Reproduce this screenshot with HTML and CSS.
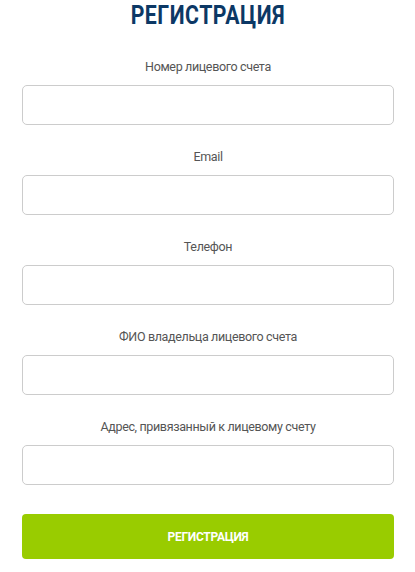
FILE: index.html
```html
<!DOCTYPE html>
<html lang="ru">
<head>
<meta charset="utf-8">
<link rel="stylesheet" href="styles.css">
</head>
<body>
<div class="page">
  <h1 class="title"><span class="title-text">РЕГИСТРАЦИЯ</span></h1>
  <form class="form">
    <div class="field">
      <label class="label">Номер лицевого счета</label>
      <input class="input" type="text">
    </div>
    <div class="field">
      <label class="label">Email</label>
      <input class="input" type="text">
    </div>
    <div class="field">
      <label class="label">Телефон</label>
      <input class="input" type="text">
    </div>
    <div class="field">
      <label class="label">ФИО владельца лицевого счета</label>
      <input class="input" type="text">
    </div>
    <div class="field">
      <label class="label">Адрес, привязанный к лицевому счету</label>
      <input class="input" type="text">
    </div>
    <button class="submit" type="button">РЕГИСТРАЦИЯ</button>
  </form>
</div>
</body>
</html>
```
FILE: styles.css
```css
html, body {
  margin: 0;
  padding: 0;
  background: #fff;
}
.page {
  padding: 0 21px 0 22px;
  font-family: Roboto, "Noto Sans", sans-serif;
}
.title {
  margin: 0 0 27px;
  padding-top: 1px;
  height: 29px;
  line-height: 29px;
  text-align: center;
  font-family: Roboto, "Noto Sans", sans-serif;
  font-size: 25px;
  font-weight: 700;
  letter-spacing: 0.6px;
  color: #0c3865;
}
.title-text {
  display: inline-block;
  transform: scaleX(0.85);
}
.form {
  display: flex;
  flex-direction: column;
}
.field {
  display: flex;
  flex-direction: column;
  margin-bottom: 22px;
}
.label {
  display: block;
  height: 20px;
  line-height: 20px;
  text-align: center;
  font-size: 12.5px;
  letter-spacing: -0.35px;
  color: #555;
  margin-bottom: 8px;
}
.input {
  box-sizing: border-box;
  height: 40px;
  width: 100%;
  border: 1px solid #cccccc;
  border-radius: 5px;
  background: #fff;
  margin: 0;
}
.submit {
  margin-top: 7px;
  height: 45px;
  width: 100%;
  border: none;
  border-radius: 4px;
  background: #99cc00;
  color: #fff;
  font-family: Roboto, "Noto Sans", sans-serif;
  font-weight: 700;
  font-size: 12px;
  letter-spacing: -0.3px;
}
```
